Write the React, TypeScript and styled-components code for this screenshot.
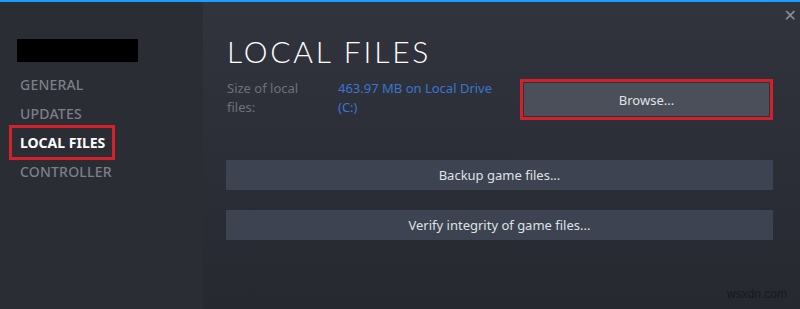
import styled, { createGlobalStyle } from 'styled-components';

const GlobalStyle = createGlobalStyle`
  html, body {
    margin: 0;
    padding: 0;
    background: #2a2d34;
  }
  #root {
    width: 800px;
    height: 309px;
    overflow: hidden;
  }
`;

const Window = styled.div`
  position: relative;
  width: 800px;
  height: 309px;
  display: flex;
  border-top: 2px solid #1a9fff;
  box-sizing: border-box;
  font-family: 'Noto Sans', 'Open Sans', Arial, sans-serif;
`;

const Sidebar = styled.nav`
  width: 203px;
  flex-shrink: 0;
  background: #2a2d34;
  padding: 37px 0 0 17px;
  box-sizing: border-box;
  display: flex;
  flex-direction: column;
`;

const Redacted = styled.div`
  width: 121px;
  height: 23px;
  background: #000;
  margin-bottom: 8px;
`;

const NavItem = styled.div<{ active?: boolean }>`
  display: flex;
  align-items: center;
  height: 29px;
  padding-left: 3px;
  font-size: 14px;
  font-weight: ${({ active }) => (active ? 700 : 500)};
  color: ${({ active }) => (active ? '#ffffff' : '#7b8088')};
  letter-spacing: 0.2px;
  text-transform: uppercase;
`;

const Highlight = styled.span`
  margin-left: -11px;
  padding: 5px 7px 5px 8px;
  border: 3px solid #d4202b;
  letter-spacing: 0;
`;

const Main = styled.main`
  flex: 1;
  background: linear-gradient(180deg, #31343c 0%, #2b2e36 55%, #262930 100%);
  padding: 29px 27px 0 24px;
  box-sizing: border-box;
  display: flex;
  flex-direction: column;
`;

const Close = styled.div`
  position: absolute;
  top: 4px;
  right: 3px;
  color: #8c9096;
  font-size: 16px;
  font-family: 'DejaVu Sans', sans-serif;
`;

const Title = styled.h1`
  margin: 0;
  font-family: Lato, 'Noto Sans', sans-serif;
  font-weight: 300;
  font-size: 30px;
  letter-spacing: 2.8px;
  line-height: 40px;
  color: #ffffff;
`;

const InfoRow = styled.div`
  display: flex;
  align-items: flex-start;
  margin-top: 8px;
`;

const Label = styled.div`
  width: 111px;
  font-size: 13px;
  line-height: 19px;
  color: #6c7179;
`;

const Value = styled.div`
  width: 170px;
  font-size: 13px;
  line-height: 19px;
  color: #3a75d1;
`;

const RedFrame = styled.div`
  margin-left: auto;
  width: 253px;
  height: 41px;
  border: 3px solid #d4202b;
  box-sizing: border-box;
  padding: 1px;
`;

const Button = styled.div<{ light?: boolean }>`
  display: flex;
  align-items: center;
  justify-content: center;
  height: ${({ light }) => (light ? '100%' : '30px')};
  background: ${({ light }) => (light ? '#4a4f59' : '#3d4350')};
  color: #dfe2e6;
  font-size: 13px;
`;

const Actions = styled.div`
  display: flex;
  flex-direction: column;
  gap: 20px;
  margin-top: 40px;
  margin-left: -1px;
`;

const Watermark = styled.div`
  position: absolute;
  right: 13px;
  bottom: 8px;
  font-size: 12px;
  color: #17191c;
  font-family: 'Liberation Sans', Arial, sans-serif;
`;

export default function App() {
  return (
    <>
      <GlobalStyle />
      <Window>
        <Sidebar>
          <Redacted />
          <NavItem>General</NavItem>
          <NavItem>Updates</NavItem>
          <NavItem active>
            <Highlight>Local Files</Highlight>
          </NavItem>
          <NavItem>Controller</NavItem>
        </Sidebar>
        <Main>
          <Title>LOCAL FILES</Title>
          <InfoRow>
            <Label>
              Size of local
              <br />
              files:
            </Label>
            <Value>
              463.97 MB on Local Drive
              <br />
              (C:)
            </Value>
            <RedFrame>
              <Button light>Browse...</Button>
            </RedFrame>
          </InfoRow>
          <Actions>
            <Button>Backup game files...</Button>
            <Button>Verify integrity of game files...</Button>
          </Actions>
        </Main>
        <Close>✕</Close>
        <Watermark>wsxdn.com</Watermark>
      </Window>
    </>
  );
}
